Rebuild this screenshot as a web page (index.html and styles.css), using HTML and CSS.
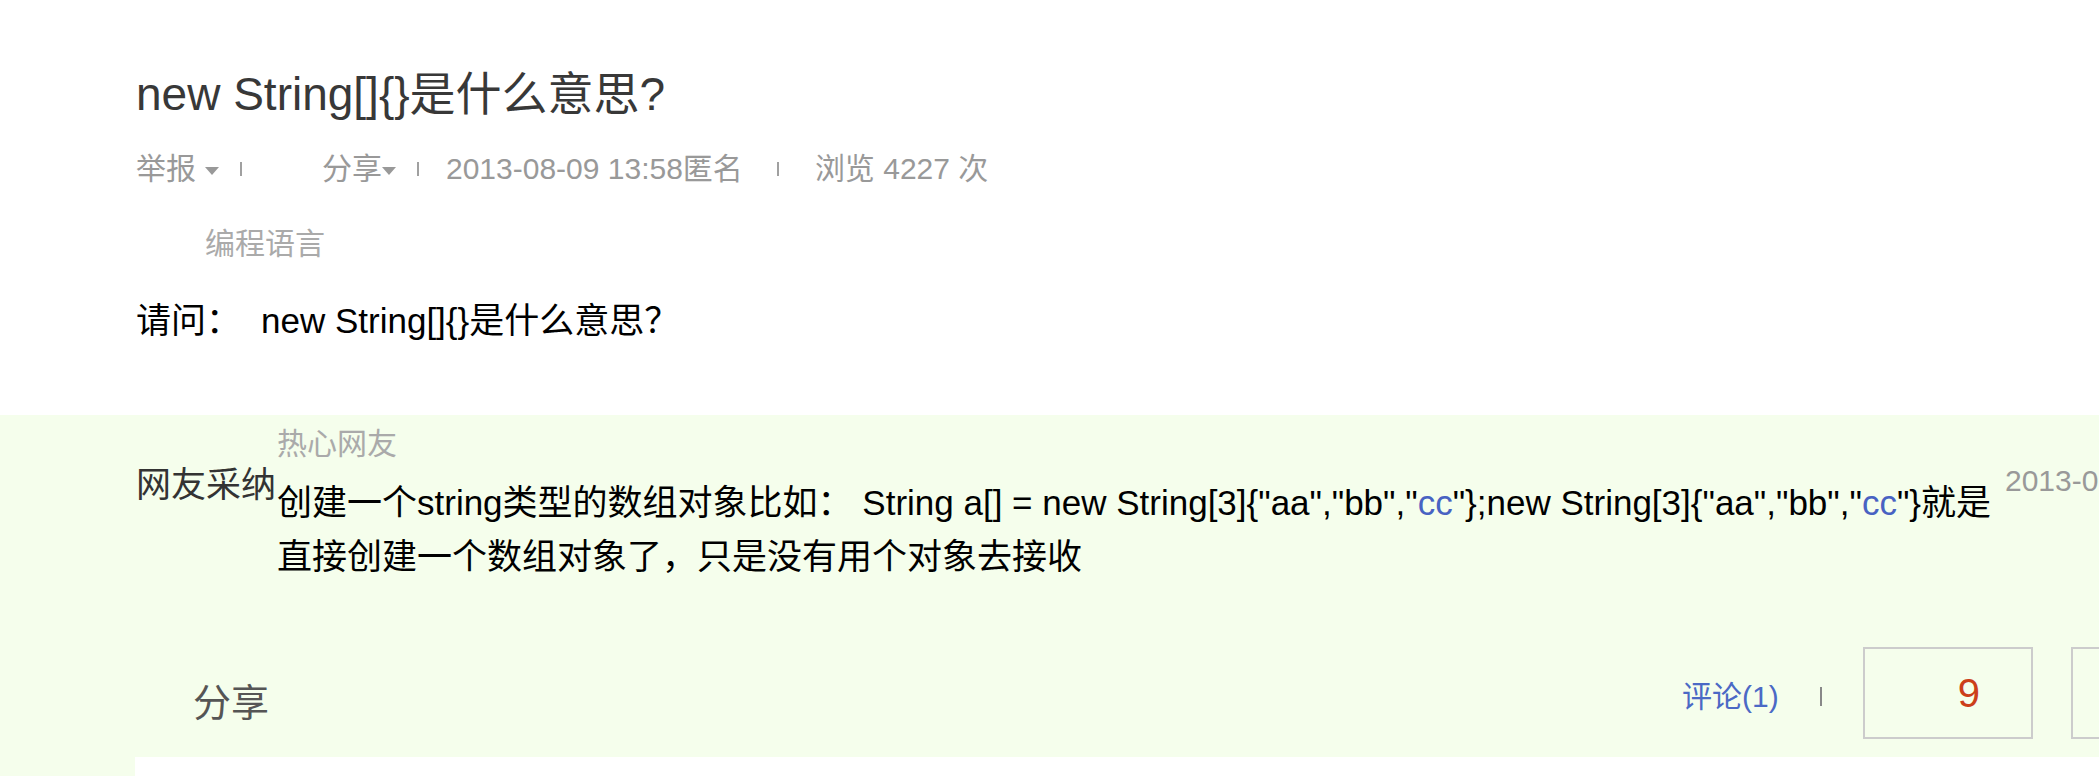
FILE: index.html
```html
<!DOCTYPE html>
<html lang="zh-CN">
<head>
<meta charset="utf-8">
<title>new String[]{}是什么意思?</title>
<link rel="stylesheet" href="styles.css">
</head>
<body>
<div class="page">
  <div class="question">
    <h1 class="title">new String[]{}是什么意思?</h1>
    <div class="meta">
      <span class="m-report">举报</span><span class="caret caret-a"></span>
      <span class="sep sep-a"></span>
      <span class="m-share">分享</span><span class="caret"></span>
      <span class="sep sep-b"></span>
      <span class="m-date">2013-08-09 13:58匿名</span>
      <span class="sep sep-c"></span>
      <span class="m-view">浏览 4227 次</span>
    </div>
    <div class="tags">编程语言</div>
    <div class="qbody"><span class="ask">请问：</span><span class="qtext">new String[]{}是什么意思？</span></div>
  </div>

  <div class="answer-wrap">
    <div class="answer">
      <div class="label">网友采纳</div>
      <div class="acontent">
        <div class="author">热心网友</div>
        <div class="atext">创建一个string类型的数组对象比如： String a[] = new String[3]{"aa","bb","<span class="hl">cc</span>"};new String[3]{"aa","bb","<span class="hl">cc</span>"}就是直接创建一个数组对象了，只是没有用个对象去接收</div>
      </div>
      <div class="adate">2013-08-09 13:58</div>
    </div>
    <div class="actions">
      <span class="share">分享</span>
      <span class="comment">评论(1)</span>
      <span class="sep2"></span>
      <div class="vote">9</div>
      <div class="vote vote2"></div>
    </div>
    <div class="next"></div>
  </div>
</div>
</body>
</html>
```
FILE: styles.css
```css
html, body {
  margin: 0;
  padding: 0;
  overflow: hidden;
  background: #fff;
}
body {
  font-family: "Liberation Sans", "Noto Sans CJK SC", sans-serif;
  color: #000;
}
.question {
  padding: 64px 0 69px 136px;
}
.title {
  margin: 0;
  font-size: 46px;
  line-height: 60px;
  font-weight: normal;
  color: #383838;
  white-space: nowrap;
}
.meta {
  margin-top: 25px;
  display: flex;
  align-items: center;
  height: 40px;
  font-size: 30px;
  line-height: 40px;
  color: #999;
  white-space: nowrap;
}
.caret {
  width: 0;
  height: 0;
  border-left: 7px solid transparent;
  border-right: 7px solid transparent;
  border-top: 8px solid #999;
  margin-top: 3px;
}
.caret-a { margin-left: 9px; }
.sep {
  width: 2px;
  height: 14px;
  background: #a0a0a0;
  margin-left: 21px;
}
.m-share { margin-left: 80px; }
.m-date { margin-left: 27px; }
.sep-c { margin-left: 34px; }
.m-view { margin-left: 36px; }
.tags {
  margin: 35px 0 0 69px;
  font-size: 30px;
  line-height: 40px;
  color: #aaa;
}
.qbody {
  margin-top: 32px;
  font-size: 35px;
  line-height: 50px;
  color: #000;
  white-space: nowrap;
}
.qtext { margin-left: 20px; }

.answer-wrap {
  background: #f5feec;
  overflow: hidden;
}
.answer {
  display: flex;
  align-items: flex-start;
  padding: 9px 0 0 136px;
}
.label {
  flex: none;
  width: 141px;
  margin-top: 36px;
  font-size: 35px;
  line-height: 50px;
  color: #333;
}
.acontent {
  flex: none;
  width: 1720px;
}
.author {
  font-size: 30px;
  line-height: 40px;
  color: #aaa;
}
.atext {
  margin-top: 12px;
  font-size: 35px;
  line-height: 54px;
  color: #000;
}
.hl { color: #4862c2; }
.adate {
  flex: none;
  margin: 37px 0 0 8px;
  font-size: 30px;
  line-height: 40px;
  color: #999;
  white-space: nowrap;
}
.actions {
  display: flex;
  align-items: flex-start;
  margin: 63px 0 0 136px;
  padding-bottom: 18px;
  white-space: nowrap;
}
.actions > * { flex: none; }
.share {
  margin: 31px 0 0 57px;
  font-size: 38px;
  line-height: 50px;
  color: #555;
}
.comment {
  margin: 30px 0 0 1413px;
  font-size: 30px;
  line-height: 40px;
  color: #4b69c5;
}
.sep2 {
  margin: 40px 0 0 41px;
  width: 2px;
  height: 19px;
  background: #888;
}
.vote {
  box-sizing: border-box;
  width: 170px;
  height: 92px;
  margin-left: 41px;
  border: 2px solid #ccc;
  padding-left: 93px;
  font-size: 40px;
  line-height: 88px;
  color: #cc3f1a;
}
.vote2 { margin-left: 38px; }
.next {
  margin-left: 135px;
  height: 40px;
  background: #fff;
}
```
